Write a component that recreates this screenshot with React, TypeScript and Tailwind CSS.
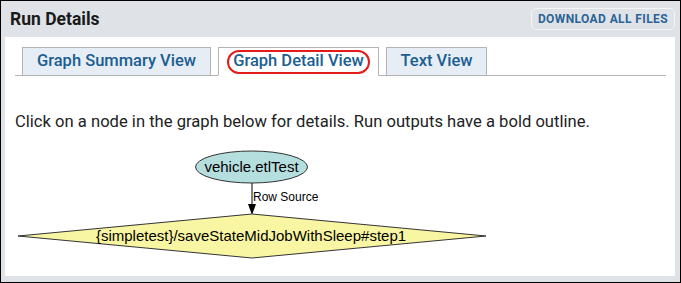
import React from "react";

const tabBase =
    "flex h-[29px] items-center justify-center border border-[#b3b3b3] text-[16.5px] font-medium text-[#1b5e91]";

function RunGraph() {
    return (
        <svg width="670" height="118" viewBox="0 0 670 118" className="block">
            <ellipse cx="246.5" cy="23" rx="56" ry="16" fill="#b5dede" stroke="#333" strokeWidth="1" />
            <text x="246.5" y="28" textAnchor="middle" fontFamily="Liberation Sans, Arial, sans-serif" fontSize="15" fill="#000">
                vehicle.etlTest
            </text>
            <line x1="247" y1="39" x2="247" y2="61" stroke="#000" strokeWidth="1" />
            <polygon points="243,60 251,60 247,71" fill="#000" />
            <text x="248" y="57" fontFamily="Liberation Sans, Arial, sans-serif" fontSize="12" fill="#000">
                Row Source
            </text>
            <polygon points="13,92 247,70 481,92 247,114" fill="#f9f6a3" stroke="#333" strokeWidth="1" />
            <text x="246" y="97" textAnchor="middle" fontFamily="Liberation Sans, Arial, sans-serif" fontSize="15" fill="#000">
                {"{simpletest}/saveStateMidJobWithSleep#step1"}
            </text>
        </svg>
    );
}

export default function App() {
    return (
        <div className="flex h-[283px] w-[681px] flex-col border border-black bg-[#dfe3e7] font-['Roboto',sans-serif]">
            <div className="flex h-[36px] items-center justify-between pl-[9px] pr-[5px]">
                <p className="text-[17.5px] font-bold text-[#1a1a1a]">Run Details</p>
                <button className="flex h-[22px] items-center rounded-[5px] border border-[#f3f5f7] px-[6px] text-[12px] font-bold tracking-[0.4px] text-[#2b6396]">
                    DOWNLOAD ALL FILES
                </button>
            </div>
            <div className="ml-[4px] mr-[5px] mb-[6px] flex-1 bg-white">
                <div className="ml-[10px] mt-[10px] flex w-[651px] gap-[7px] border-b border-[#b3b3b3] pl-[7px]">
                    <div className={`${tabBase} -mb-px w-[189px] bg-[#e6edf4]`}>Graph Summary View</div>
                    <div className={`${tabBase} -mb-px w-[161px] border-b-white bg-white`}>
                        <span className="flex h-[24px] items-center rounded-[12px] border-2 border-[#e41b1b] px-[4px]">
                            Graph Detail View
                        </span>
                    </div>
                    <div className={`${tabBase} -mb-px w-[101px] bg-[#e6edf4]`}>Text View</div>
                </div>
                <p className="ml-[10px] mt-[36px] text-[16.6px] leading-[20px] text-[#222]">
                    Click on a node in the graph below for details. Run outputs have a bold outline.
                </p>
                <div className="mt-[12px]">
                    <RunGraph />
                </div>
            </div>
        </div>
    );
}
